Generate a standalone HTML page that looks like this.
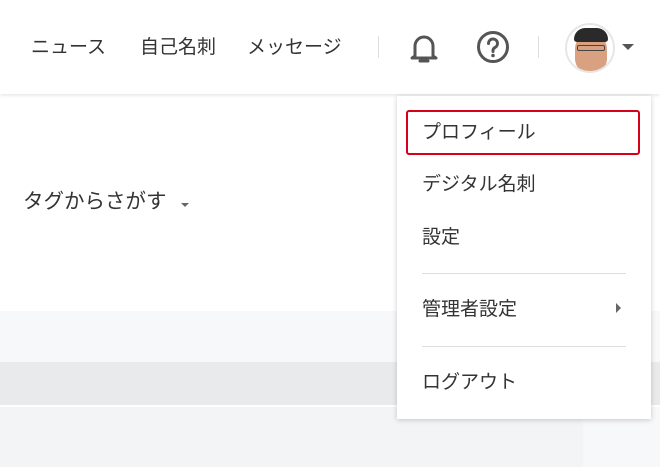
<!DOCTYPE html>
<html><head><meta charset="utf-8"><style>
*{margin:0;padding:0;box-sizing:border-box}
body{width:660px;height:467px;position:relative;overflow:hidden;background:#fff;font-family:"Liberation Sans","Noto Sans CJK JP",sans-serif;color:#333}
.hdr{position:absolute;left:0;top:0;width:660px;height:94px;background:#fff;box-shadow:0 1px 4px rgba(0,0,0,.12)}
.t{position:absolute;font-size:19px;line-height:22px;white-space:nowrap;color:#333}
.sep{position:absolute;top:36px;width:1px;height:22px;background:#ddd}
.menu{position:absolute;left:397px;top:96px;width:254px;height:323px;background:#fff;box-shadow:0 1px 5px rgba(0,0,0,.2)}
.red{position:absolute;left:9px;top:14px;width:234px;height:45px;border:2px solid #d7001a;border-radius:3px}
.div{position:absolute;left:25px;width:204px;height:1px;background:#ddd}
</style></head><body>
<div style="position:absolute;left:0;top:311px;width:660px;height:51px;background:#f7f8f9"></div>
<div style="position:absolute;left:0;top:362px;width:660px;height:43px;background:#e9eaec"></div>
<div style="position:absolute;left:0;top:407px;width:583px;height:60px;background:#f3f4f6"></div>
<div style="position:absolute;left:583px;top:407px;width:77px;height:60px;background:#f7f8f9"></div>
<div class="hdr">
<div class="t" style="left:31px;top:37px">ニュース</div>
<div class="t" style="left:140px;top:37px">自己名刺</div>
<div class="t" style="left:247px;top:37px">メッセージ</div>
<div class="sep" style="left:378px"></div>
<svg style="position:absolute;left:406px;top:30px" width="36" height="36" viewBox="0 0 36 36"><path d="M9 26V16a9 9 0 0 1 18 0v10l3 2H6z" fill="none" stroke="#555" stroke-width="3" stroke-linejoin="round"/><path d="M14 31h8" stroke="#555" stroke-width="3" stroke-linecap="round"/></svg>
<svg style="position:absolute;left:476px;top:30px" width="34" height="34" viewBox="0 0 34 34"><circle cx="17" cy="17" r="14.5" fill="none" stroke="#555" stroke-width="3"/><path d="M12.5 13.5a4.5 4.5 0 1 1 6.5 4c-1.5.8-2 1.5-2 3v1" fill="none" stroke="#555" stroke-width="3" stroke-linecap="round"/><circle cx="17" cy="25.5" r="1.8" fill="#555"/></svg>
<div class="sep" style="left:538px"></div>
<div style="position:absolute;left:565px;top:23px;width:50px;height:50px;border-radius:50%;border:2px solid #e6e6e6;background:#fff;overflow:hidden">
<div style="position:absolute;left:8px;top:8px;width:32px;height:40px;border-radius:16px 16px 14px 14px;background:#d9a17f"></div>
<div style="position:absolute;left:7px;top:3px;width:34px;height:14px;border-radius:16px 16px 4px 4px;background:#2a2a2a"></div>
<div style="position:absolute;left:10px;top:20px;width:28px;height:6px;border:1.5px solid #444;border-radius:2px"></div>
</div>
<div style="position:absolute;left:622px;top:44px;border-left:6px solid transparent;border-right:6px solid transparent;border-top:6px solid #555"></div>
</div>
<div class="t" style="left:23px;top:190px;font-size:20.5px;line-height:24px">タグからさがす</div>
<div style="position:absolute;left:181px;top:203px;border-left:4px solid transparent;border-right:4px solid transparent;border-top:4px solid #666"></div>
<div class="menu">
<div class="red"></div>
<div class="t" style="left:25px;top:26px">プロフィール</div>
<div class="t" style="left:25px;top:78px">デジタル名刺</div>
<div class="t" style="left:25px;top:131px">設定</div>
<div class="div" style="top:177px"></div>
<div class="t" style="left:25px;top:203px">管理者設定</div>
<div style="position:absolute;left:219px;top:207px;border-top:5px solid transparent;border-bottom:5px solid transparent;border-left:5px solid #666"></div>
<div class="div" style="top:250px"></div>
<div class="t" style="left:25px;top:276px">ログアウト</div>
</div>
</body></html>
